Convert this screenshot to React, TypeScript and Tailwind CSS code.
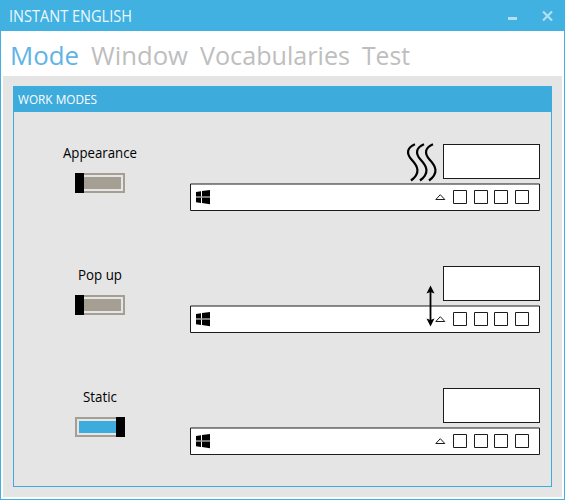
import React from "react";

type Mode = "Appearance" | "Pop up" | "Static";

const font = "font-['Open_Sans','Noto_Sans',sans-serif]";

function Label({ text, width, className }: { text: string; width: number; className: string }) {
  return (
    <svg width={width} height="40" className="block shrink-0 overflow-visible">
      <text x="0" y="30" textLength={width} lengthAdjust="spacingAndGlyphs" className={className}>
        {text}
      </text>
    </svg>
  );
}

function Toggle({ on }: { on: boolean }) {
  const thumb = <div className="h-5 w-[9px] shrink-0 bg-black" />;
  const track = (
    <div className={`flex-1 border-y-2 border-[#a59f93] py-0.5 ${on ? "border-l-2 pl-0.5" : "border-r-2 pr-0.5"}`}>
      <div className={`h-3 ${on ? "bg-[#3dabdc]" : "bg-[#a59f93]"}`} />
    </div>
  );
  return (
    <div className="flex h-5 w-[50px]">
      {!on && thumb}
      {track}
      {on && thumb}
    </div>
  );
}

function Taskbar({ mode }: { mode: Mode }) {
  return (
    <svg width="350" height="70" viewBox="0 0 350 70" className="block" fill="none" stroke="#1c1c1c">
      <rect x="253.5" y="1.5" width="96" height="34" fill="#fff" />
      <path d="M.5 41H349.5V67.5H.5Z" fill="#fff" />
      <path
        d="M6 49 11 48.3V53.5H6ZM12 48.1 20 47V53.5H12ZM6 54.5H11V60L6 59.3ZM12 54.5H20V61.2L12 60.1Z"
        fill="#000"
        stroke="none"
      />
      <path d="M6 54H20" stroke="#777" />
      <path d="M245.8 56.5 250.3 51.7 254.8 56.5Z" />
      <path d="M263.5 47.5h13v13h-13ZM284.5 47.5h13v13h-13ZM304.5 47.5h13v13h-13ZM325.5 47.5h13v13h-13Z" />
      {mode === "Appearance" && (
        <g stroke="#000" strokeWidth="2.2">
          <path d="M225 1.2C217 4.5 216 10.5 221.5 16.5C228 23.5 231 30 221 37.5" />
          <path d="M234 1.2C226 4.5 225 10.5 230.5 16.5C237 23.5 240 30 230 37.5" />
          <path d="M243 1.2C235 4.5 234 10.5 239.5 16.5C246 23.5 249 30 239 37.5" />
        </g>
      )}
      {mode === "Pop up" && (
        <g fill="#000" stroke="none">
          <path d="M239.6 24h1.8v34h-1.8Z" />
          <path d="M240.5 20.5 244.5 28.5 240.5 27 236.5 28.5Z" />
          <path d="M240.5 61.5 244.5 53.5 240.5 55 236.5 53.5Z" />
        </g>
      )}
    </svg>
  );
}

const modes: { name: Mode; width: number }[] = [
  { name: "Appearance", width: 74 },
  { name: "Pop up", width: 44 },
  { name: "Static", width: 34 },
];

export default function App() {
  return (
    <div className={`flex h-[500px] w-[565px] flex-col border border-t-0 border-[#41b1e1] bg-white ${font}`}>
      <header className="flex h-[31px] shrink-0 items-start justify-between bg-[#41b1e1] pl-2">
        <div className="-mt-2">
          <Label text="INSTANT ENGLISH" width={123} className="fill-[#edf8fd] text-[15.5px]" />
        </div>
        <svg width="60" height="31" className="text-[#b3dff3]">
          <path d="M4 17h9v3h-9Z" fill="currentColor" />
          <path d="M39 11.5 48 20.5M48 11.5 39 20.5" stroke="currentColor" strokeWidth="2.2" />
        </svg>
      </header>
      <nav className="flex h-[45px] shrink-0 gap-[12px] pl-[9px] pt-1">
        <Label text="Mode" width={69} className="fill-[#5fb4e4] text-[26px]" />
        <Label text="Window" width={97} className="fill-[#bebebe] text-[26px]" />
        <Label text="Vocabularies" width={150} className="fill-[#bebebe] text-[26px]" />
        <Label text="Test" width={48} className="fill-[#bebebe] text-[26px]" />
      </nav>
      <main className="mx-0.5 mb-0.5 flex-1 bg-[#e5e5e5] p-2.5">
        <section className="h-[401px] border border-[#3dabdc]">
          <h1 className="flex h-[25px] bg-[#3dabdc] pl-1">
            <div className="-mt-[13px]">
              <Label text="WORK MODES" width={79} className="fill-white text-[12.5px]" />
            </div>
          </h1>
          <div className="pt-[31px]">
            {modes.map((m) => (
              <div key={m.name} className="flex h-[122px]">
                <div className="mr-1 flex w-[172px] flex-col items-center">
                  <div className="-mt-[15px] h-[45px]">
                    <Label text={m.name} width={m.width} className="fill-black text-[14px]" />
                  </div>
                  <Toggle on={m.name === "Static"} />
                </div>
                <Taskbar mode={m.name} />
              </div>
            ))}
          </div>
        </section>
      </main>
    </div>
  );
}
